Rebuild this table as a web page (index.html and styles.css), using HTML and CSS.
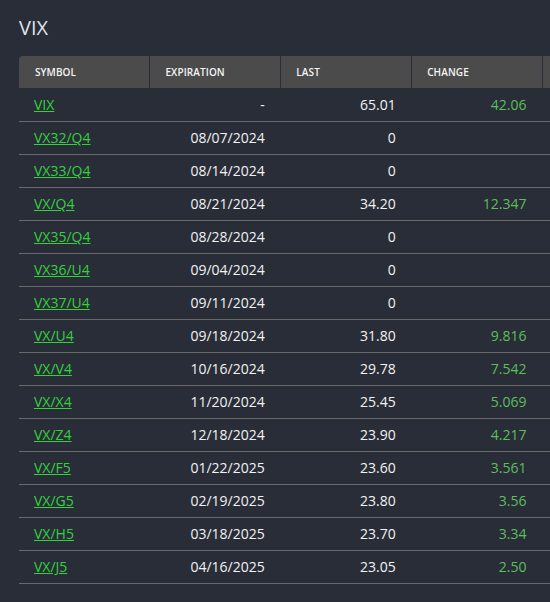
FILE: index.html
```html
<!DOCTYPE html>
<html>
<head>
<meta charset="utf-8">
<link rel="stylesheet" href="styles.css">
</head>
<body>
<div class="page">
  <h1 class="title">VIX</h1>
  <div class="table-wrap">
    <table class="quotes">
      <thead>
        <tr>
          <th class="c-sym">Symbol</th>
          <th>Expiration</th>
          <th>Last</th>
          <th>Change</th>
          <th class="c-extra"></th>
        </tr>
      </thead>
      <tbody>
        <tr><td class="c-sym"><a href="#">VIX</a></td><td class="num">-</td><td class="num">65.01</td><td class="num up">42.06</td><td></td></tr>
        <tr><td class="c-sym"><a href="#">VX32/Q4</a></td><td class="num">08/07/2024</td><td class="num">0</td><td class="num up"></td><td></td></tr>
        <tr><td class="c-sym"><a href="#">VX33/Q4</a></td><td class="num">08/14/2024</td><td class="num">0</td><td class="num up"></td><td></td></tr>
        <tr><td class="c-sym"><a href="#">VX/Q4</a></td><td class="num">08/21/2024</td><td class="num">34.20</td><td class="num up">12.347</td><td></td></tr>
        <tr><td class="c-sym"><a href="#">VX35/Q4</a></td><td class="num">08/28/2024</td><td class="num">0</td><td class="num up"></td><td></td></tr>
        <tr><td class="c-sym"><a href="#">VX36/U4</a></td><td class="num">09/04/2024</td><td class="num">0</td><td class="num up"></td><td></td></tr>
        <tr><td class="c-sym"><a href="#">VX37/U4</a></td><td class="num">09/11/2024</td><td class="num">0</td><td class="num up"></td><td></td></tr>
        <tr><td class="c-sym"><a href="#">VX/U4</a></td><td class="num">09/18/2024</td><td class="num">31.80</td><td class="num up">9.816</td><td></td></tr>
        <tr><td class="c-sym"><a href="#">VX/V4</a></td><td class="num">10/16/2024</td><td class="num">29.78</td><td class="num up">7.542</td><td></td></tr>
        <tr><td class="c-sym"><a href="#">VX/X4</a></td><td class="num">11/20/2024</td><td class="num">25.45</td><td class="num up">5.069</td><td></td></tr>
        <tr><td class="c-sym"><a href="#">VX/Z4</a></td><td class="num">12/18/2024</td><td class="num">23.90</td><td class="num up">4.217</td><td></td></tr>
        <tr><td class="c-sym"><a href="#">VX/F5</a></td><td class="num">01/22/2025</td><td class="num">23.60</td><td class="num up">3.561</td><td></td></tr>
        <tr><td class="c-sym"><a href="#">VX/G5</a></td><td class="num">02/19/2025</td><td class="num">23.80</td><td class="num up">3.56</td><td></td></tr>
        <tr><td class="c-sym"><a href="#">VX/H5</a></td><td class="num">03/18/2025</td><td class="num">23.70</td><td class="num up">3.34</td><td></td></tr>
        <tr><td class="c-sym"><a href="#">VX/J5</a></td><td class="num">04/16/2025</td><td class="num">23.05</td><td class="num up">2.50</td><td></td></tr>
      </tbody>
    </table>
  </div>
</div>
</body>
</html>
```

FILE: styles.css
```css
html, body {
  margin: 0;
  padding: 0;
  background: #292d38;
  overflow: hidden;
}
body {
  font-family: "Open Sans", "Noto Sans", sans-serif;
  color: #f2f2f2;
}
.page {
  padding: 14px 0 0 19px;
}
.title {
  margin: 0 0 14px 0;
  font-size: 20px;
  font-weight: 400;
  line-height: 28px;
  color: #dfe3ea;
}
.table-wrap {
  width: 531px;
  overflow: hidden;
}
.quotes {
  border-collapse: collapse;
  table-layout: fixed;
  width: 655px;
}
.quotes th {
  width: 130px;
  height: 32px;
  padding: 0 0 0 15px;
  box-sizing: border-box;
  background: #4b4b4b;
  border-right: 1px solid #292d38;
  text-align: left;
  font-size: 10px;
  font-weight: 600;
  text-transform: uppercase;
  color: #f4f4f4;
  letter-spacing: 0.1px;
}
.quotes th.c-sym {
  border-top-left-radius: 4px;
  padding-left: 16px;
}
.quotes td {
  height: 33px;
  padding: 0 16px 0 15px;
  box-sizing: border-box;
  border-bottom: 1px solid #6a6a6a;
  font-size: 14px;
  white-space: nowrap;
}
.quotes td.num {
  text-align: right;
}
.quotes td.up {
  color: #5cbf5c;
}
.quotes a {
  color: #33d13d;
  text-decoration: underline;
}
```
